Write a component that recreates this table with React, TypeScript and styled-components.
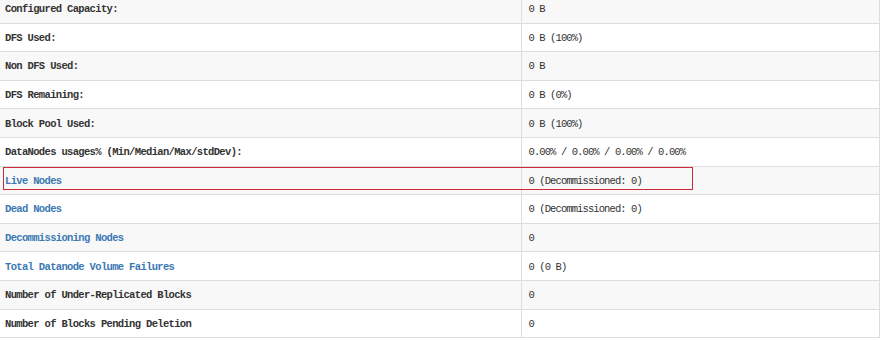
import styled, { createGlobalStyle } from "styled-components";

const GlobalStyle = createGlobalStyle`
  html, body {
    margin: 0;
    padding: 0;
    background: #ffffff;
  }
`;

const Page = styled.div`
  position: relative;
  width: 890px;
  height: 341px;
  overflow: hidden;
  background: #ffffff;
`;

const Table = styled.table`
  width: 880px;
  margin-top: -5.5px;
  border-collapse: collapse;
  font-family: "Liberation Mono", "DejaVu Sans Mono", monospace;
  font-size: 10.5px;
  letter-spacing: -0.9px;
  color: #333333;
  border-right: 1px solid #dddddd;
`;

const Row = styled.tr<{ $striped: boolean }>`
  height: 28.6px;
  background: ${(p) => (p.$striped ? "#f8f8f8" : "#ffffff")};
  border-bottom: 1px solid #dddddd;
`;

const Label = styled.th`
  width: 521px;
  padding: 1px 0 0 5px;
  text-align: left;
  font-weight: bold;
  letter-spacing: -0.66px;
  border-right: 1px solid #dddddd;
  box-sizing: border-box;
`;

const Value = styled.td`
  padding: 1px 0 0 7px;
`;

const Link = styled.a`
  color: #3b78b4;
  text-decoration: none;
`;

const Highlight = styled.div`
  position: absolute;
  left: 3px;
  top: 167px;
  width: 690px;
  height: 23px;
  border: 1px solid #cc2a3c;
  box-sizing: border-box;
  pointer-events: none;
`;

type Stat = {
  label: string;
  value: string;
  link?: boolean;
};

const stats: Stat[] = [
  { label: "Configured Capacity:", value: "0 B" },
  { label: "DFS Used:", value: "0 B (100%)" },
  { label: "Non DFS Used:", value: "0 B" },
  { label: "DFS Remaining:", value: "0 B (0%)" },
  { label: "Block Pool Used:", value: "0 B (100%)" },
  {
    label: "DataNodes usages% (Min/Median/Max/stdDev):",
    value: "0.00% / 0.00% / 0.00% / 0.00%",
  },
  { label: "Live Nodes", value: "0 (Decommissioned: 0)", link: true },
  { label: "Dead Nodes", value: "0 (Decommissioned: 0)", link: true },
  { label: "Decommissioning Nodes", value: "0", link: true },
  { label: "Total Datanode Volume Failures", value: "0 (0 B)", link: true },
  { label: "Number of Under-Replicated Blocks", value: "0" },
  { label: "Number of Blocks Pending Deletion", value: "0" },
];

const App = () => (
  <Page>
    <GlobalStyle />
    <Table>
      <tbody>
        {stats.map((item, i) => (
          <Row key={item.label} $striped={i % 2 === 0}>
            <Label>
              {item.link ? <Link href="#">{item.label}</Link> : item.label}
            </Label>
            <Value>{item.value}</Value>
          </Row>
        ))}
      </tbody>
    </Table>
    <Highlight />
  </Page>
);

export default App;
